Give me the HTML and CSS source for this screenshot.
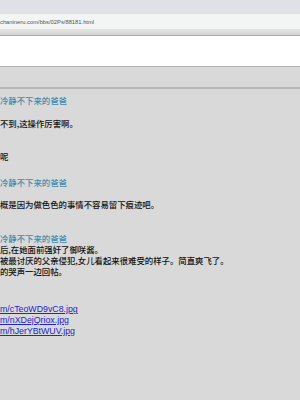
FILE: index.html
```html
<!DOCTYPE HTML>
<html>
	<head><title>冷静不下来的爸爸</title>
		<meta charset="utf-8">
		<meta name="viewport" content="width=device-width, initial-scale=1">
		<link rel="stylesheet" href="styles.css">
	</head>
	<body>
		<div class="chrome-top"></div>
		<div class="address">chanineru.com/bbs/02Ps/88181.html</div>
		<div class="toolbar"></div>
		<div class="blank"></div>
		<div class="band"></div>

		<div class="posts">
			<div class="name">冷静不下来的爸爸</div>
			<div class="msg msg-first">不到,这操作厉害啊。<br><br><br>呢</div>

			<div class="name name-second">冷静不下来的爸爸</div>
			<div class="msg msg-second">概是因为做色色的事情不容易留下痕迹吧。</div>

			<div class="name name-third">冷静不下来的爸爸</div>
			<div class="msg">后,在她面前强奸了御咲酱。<br>被最讨厌的父亲侵犯,女儿看起来很难受的样子。简直爽飞了。<br>的哭声一边回帖。</div>

			<div class="links">
				<a href="#">m/cTeoWD9vC8.jpg</a><br>
				<a href="#">m/nXDejQriox.jpg</a><br>
				<a href="#">m/hJerYBtWUV.jpg</a>
			</div>
		</div>
	</body>
</html>
```

FILE: styles.css
```css
* {box-sizing: border-box;}

body {
	margin: 0;
	background-color: #d9d9d9;
	overflow: hidden;
	font-family: "Noto Sans CJK SC", "Noto Sans", sans-serif;
}

.chrome-top {
	height: 14px;
	background-color: #dfe1e6;
}

.address {
	height: 15px;
	background-color: #f3f4f4;
	color: #555;
	font-family: "Liberation Sans", sans-serif;
	font-size: 5.8px;
	line-height: 16px;
	white-space: nowrap;
}

.toolbar {
	height: 7px;
	background: linear-gradient(#e4e4e2, #d3d3d1);
	border-bottom: 1px solid #a9a9a9;
}

.blank {
	height: 31px;
	background-color: #fff;
	border-bottom: 1px solid #b3b3b3;
}

.band {
	height: 22px;
	border-bottom: 2px solid #b6b6b6;
}

.posts {
	padding-top: 6px;
	font-size: 8.4px;
	font-weight: 500;
	line-height: 11px;
	color: #111;
	white-space: nowrap;
}

.name {
	color: #3f8ab0;
}

.name-second {margin-top: 15px;}
.name-third {margin-top: 23px;}

.msg-first {margin-top: 12px;}
.msg-second {margin-top: 11px;}

.links {
	margin-top: 27px;
	font-family: "Liberation Sans", sans-serif;
	font-size: 8.8px;
}

.links a {
	color: #2424d0;
}
```
